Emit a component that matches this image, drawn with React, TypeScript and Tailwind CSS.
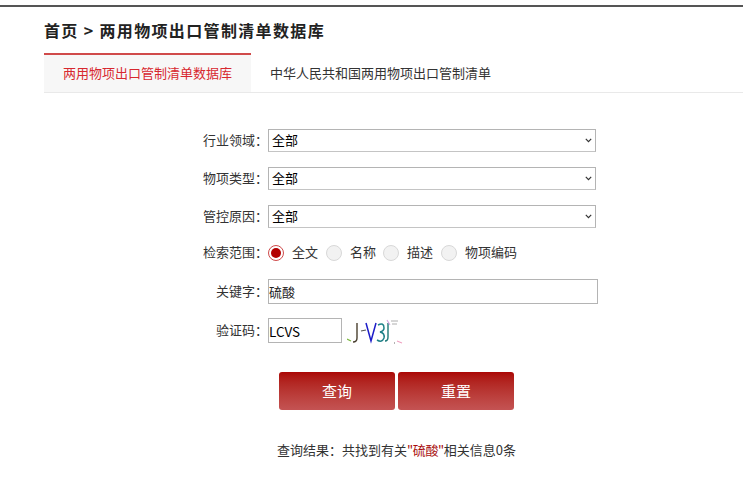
import React from "react";

const cjk = { fontFamily: '"Noto Sans CJK SC", "Noto Sans", sans-serif' };

function Label({ text }: { text: string }) {
  return <label className="w-[268px] text-right text-[13px] text-[#333] shrink-0 -translate-y-[1px]">{text}：</label>;
}

function SelectRow({ label }: { label: string }) {
  return (
    <div className="flex items-center h-[23px]">
      <Label text={label} />
      <div className="relative w-[328px] h-[23px]">
        <select className="block w-full h-full bg-white border border-[#b4b4b4] border-b-[#c4c4c4] text-[13px] text-black appearance-none pl-[3px] pb-[2px] outline-none" defaultValue="全部" style={cjk}>
          <option>全部</option>
        </select>
        <svg className="absolute right-[4px] top-[9px] pointer-events-none" width="7" height="5" viewBox="0 0 7 5">
          <path d="M0.8 0.8 L3.5 3.6 L6.2 0.8" stroke="#333" strokeWidth="1.2" fill="none" />
        </svg>
      </div>
    </div>
  );
}

function Radio({ checked, label, className }: { checked?: boolean; label: string; className: string }) {
  return (
    <div className={`flex items-center ${className}`}>
      <span className={`flex items-center justify-center w-[16px] h-[16px] rounded-full border ${checked ? "border-[#cf4b4b] bg-white" : "border-[#d8d8d8] bg-[#f2f2f2]"}`}>
        {checked && <span className="w-[10px] h-[10px] rounded-full bg-[#b30000]" />}
      </span>
      <span className="ml-[8px] text-[13px] text-[#333] -translate-y-[1px]">{label}</span>
    </div>
  );
}

export default function App() {
  return (
    <div className="relative w-[743px] h-[500px] bg-white overflow-hidden" style={cjk}>
      <div className="h-[5px] bg-white" />
      <div className="h-[2px] bg-[#555]" />
      <div className="pl-[44px]">
        <div className="h-[46px] flex items-center text-[16px] font-bold text-[#222] tracking-[1.35px]">首页 &gt; 两用物项出口管制清单数据库</div>
        <div className="flex h-[40px] border-b border-[#e9e9e9]">
          <div className="w-[207px] h-[39px] border-t-2 border-[#d04a4a] bg-[#f7f7f7] flex items-center justify-center text-[13px] text-[#d7282f] pb-[2px]">两用物项出口管制清单数据库</div>
          <div className="ml-[19px] h-[39px] flex items-center text-[13px] text-[#333]">中华人民共和国两用物项出口管制清单</div>
        </div>
      </div>

      <div className="mt-[36px] flex flex-col">
        <SelectRow label="行业领域" />
        <div className="h-[15px]" />
        <SelectRow label="物项类型" />
        <div className="h-[15px]" />
        <SelectRow label="管控原因" />

        <div className="flex items-center h-[24px] mt-[13px]">
          <Label text="检索范围" />
          <Radio checked label="全文" className="mr-[8px]" />
          <Radio label="名称" className="mr-[7px]" />
          <Radio label="描述" className="mr-[8px]" />
          <Radio label="物项编码" className="" />
        </div>

        <div className="flex items-center h-[25px] mt-[14px]">
          <Label text="关键字" />
          <input readOnly value="硫酸" className="w-[330px] h-[25px] border border-[#b4b4b4] text-[13px] text-[#222] px-0 pb-[1px] outline-none" style={cjk} />
        </div>

        <div className="flex items-center h-[25px] mt-[14px]">
          <Label text="验证码" />
          <input readOnly value="LCVS" className="w-[74px] h-[25px] border border-[#b4b4b4] text-[13.5px] text-black px-0 outline-none" style={cjk} />
          <svg className="ml-[5px]" width="60" height="26" viewBox="0 0 60 26">
            <path d="M0 21 L4 23" stroke="#7cb83e" strokeWidth="1.2" fill="none" />
            <path d="M10 5 L10 20 Q10 24 6 24" stroke="#4a4030" strokeWidth="1.4" fill="none" />
            <path d="M14 13 L19 12" stroke="#555" strokeWidth="1.1" fill="none" />
            <path d="M19 5 L24 23 L29 5" stroke="#1c1cc8" strokeWidth="1.5" fill="none" />
            <path d="M31 7 Q37 4 37 10 Q37 13 33 14 Q38 15 37 20 Q35 25 30 22" stroke="#1f8088" strokeWidth="1.5" fill="none" />
            <path d="M41 5 L41 19 Q41 23 38 23" stroke="#1f7878" strokeWidth="1.4" fill="none" />
            <path d="M40 2 L43 7" stroke="#d8a0e0" strokeWidth="1.1" fill="none" />
            <path d="M44 3 L51 3 M45 6 L50 6" stroke="#999" strokeWidth="0.8" fill="none" />
            <path d="M50 23 L55 25" stroke="#f0a0c0" strokeWidth="1.1" fill="none" />
            <path d="M47 25 L48 25" stroke="#666" strokeWidth="1" fill="none" />
          </svg>
        </div>

        <div className="flex justify-start pl-[279px] mt-[29px] gap-[3px]">
          <button className="w-[116px] h-[38px] rounded-[3px] bg-gradient-to-b from-[#ab0504] to-[#c45353] text-white text-[15px]" style={cjk}>查询</button>
          <button className="w-[116px] h-[38px] rounded-[3px] bg-gradient-to-b from-[#ab0504] to-[#c45353] text-white text-[15px]" style={cjk}>重置</button>
        </div>

        <div className="mt-[30px] text-center text-[13px] text-[#333] pl-[50px] w-[743px]">
          查询结果：共找到有关<span className="text-[#a80d0d] tracking-[-0.4px]">"硫酸"</span>相关信息0条
        </div>
      </div>
    </div>
  );
}
